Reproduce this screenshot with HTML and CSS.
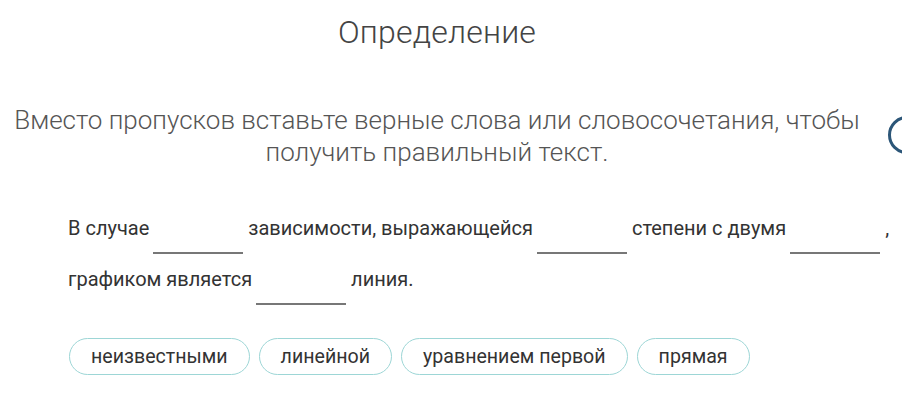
FILE: index.html
```html
<!DOCTYPE html>
<html lang="ru">
<head>
<meta charset="utf-8">
<link rel="stylesheet" href="styles.css">
</head>
<body>
<div class="page">
  <h1 class="title">Определение</h1>
  <p class="task">Вместо пропусков вставьте верные слова или словосочетания, чтобы получить правильный текст.</p>
  <div class="text">
    <span>В случае</span><span class="blank"></span><span>зависимости, выражающейся</span><span class="blank"></span><span>степени с двумя</span><span class="blank"></span><span class="comma">,</span>
    <span>графиком является</span><span class="blank"></span><span>линия.</span>
  </div>
  <div class="chips">
    <span class="chip">неизвестными</span>
    <span class="chip">линейной</span>
    <span class="chip">уравнением первой</span>
    <span class="chip">прямая</span>
  </div>
</div>
<div class="side-btn"></div>
</body>
</html>
```

FILE: styles.css
```css
html, body {
  margin: 0;
  padding: 0;
  background: #fff;
}
body {
  font-family: Roboto, "Noto Sans", sans-serif;
  width: 902px;
  height: 404px;
  overflow: hidden;
  position: relative;
}
.page {
  width: 874px;
  display: flex;
  flex-direction: column;
}
.title {
  margin: 12px 0 0;
  text-align: center;
  font-weight: 300;
  font-size: 32px;
  line-height: 40px;
  color: #444;
  letter-spacing: 0.2px;
}
.task {
  margin: 52px 0 0;
  text-align: center;
  font-weight: 300;
  font-size: 26px;
  line-height: 32px;
  color: #555;
}
.text {
  margin: 35px 0 0 68px;
  width: 830px;
  font-size: 20px;
  line-height: 50px;
  color: #333;
}
.blank {
  display: inline-block;
  width: 90px;
  height: 20px;
  border-bottom: 2px solid #777;
  margin: 0 5px 0 4px;
  vertical-align: -19px;
}
.chips {
  display: flex;
  gap: 9px;
  margin: 33px 0 0 69px;
}
.chip {
  box-sizing: border-box;
  display: inline-flex;
  align-items: center;
  height: 37px;
  padding: 0 21px;
  border: 1.5px solid #9dd6d6;
  border-radius: 20px;
  font-size: 19.6px;
  color: #333;
}
.side-btn {
  position: absolute;
  left: 888px;
  top: 116px;
  width: 32px;
  height: 32px;
  border: 3px solid #2c5678;
  border-radius: 50%;
}
```
